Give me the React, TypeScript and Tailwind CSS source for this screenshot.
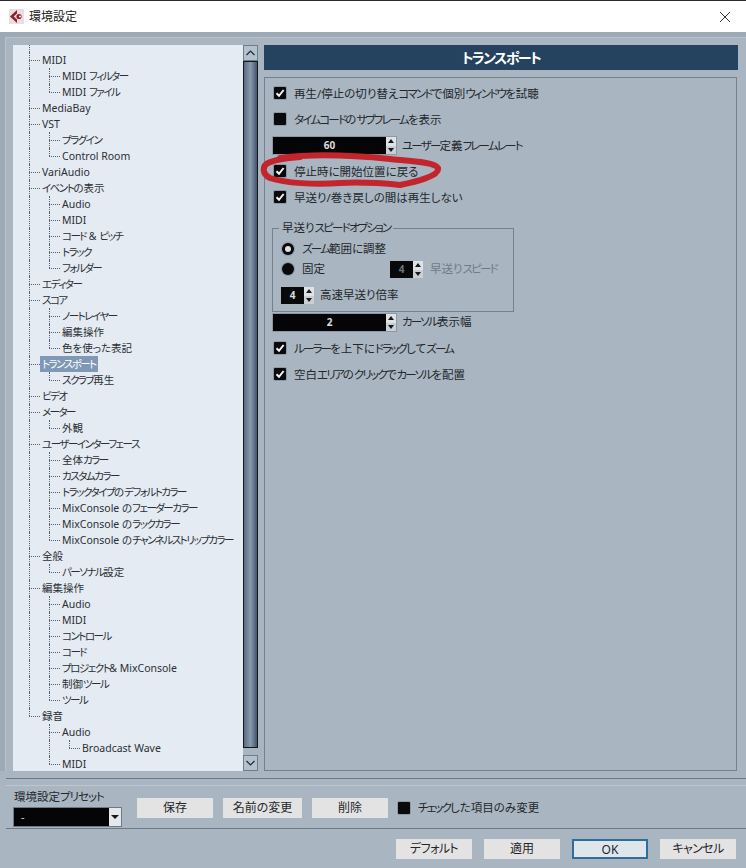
const font = { fontFamily: '"Noto Sans", "Noto Sans CJK JP", sans-serif' };

type Row = { label: string; depth: number; selected?: boolean };

const rows: Row[] = [
  { label: 'MIDI', depth: 0 },
  { label: 'MIDI フィルター', depth: 1 },
  { label: 'MIDI ファイル', depth: 1 },
  { label: 'MediaBay', depth: 0 },
  { label: 'VST', depth: 0 },
  { label: 'プラグイン', depth: 1 },
  { label: 'Control Room', depth: 1 },
  { label: 'VariAudio', depth: 0 },
  { label: 'イベントの表示', depth: 0 },
  { label: 'Audio', depth: 1 },
  { label: 'MIDI', depth: 1 },
  { label: 'コード & ピッチ', depth: 1 },
  { label: 'トラック', depth: 1 },
  { label: 'フォルダー', depth: 1 },
  { label: 'エディター', depth: 0 },
  { label: 'スコア', depth: 0 },
  { label: 'ノートレイヤー', depth: 1 },
  { label: '編集操作', depth: 1 },
  { label: '色を使った表記', depth: 1 },
  { label: 'トランスポート', depth: 0, selected: true },
  { label: 'スクラブ再生', depth: 1 },
  { label: 'ビデオ', depth: 0 },
  { label: 'メーター', depth: 0 },
  { label: '外観', depth: 1 },
  { label: 'ユーザーインターフェース', depth: 0 },
  { label: '全体カラー', depth: 1 },
  { label: 'カスタムカラー', depth: 1 },
  { label: 'トラックタイプのデフォルトカラー', depth: 1 },
  { label: 'MixConsole のフェーダーカラー', depth: 1 },
  { label: 'MixConsole のラックカラー', depth: 1 },
  { label: 'MixConsole のチャンネルストリップカラー', depth: 1 },
  { label: '全般', depth: 0 },
  { label: 'パーソナル設定', depth: 1 },
  { label: '編集操作', depth: 0 },
  { label: 'Audio', depth: 1 },
  { label: 'MIDI', depth: 1 },
  { label: 'コントロール', depth: 1 },
  { label: 'コード', depth: 1 },
  { label: 'プロジェクト& MixConsole', depth: 1 },
  { label: '制御ツール', depth: 1 },
  { label: 'ツール', depth: 1 },
  { label: '録音', depth: 0 },
  { label: 'Audio', depth: 1 },
  { label: 'Broadcast Wave', depth: 2 },
  { label: 'MIDI', depth: 1 },
];

// katakana in the original UI font is much narrower than in Noto, so tighten just those runs
function Kana({ text, tight = 'tracking-[-1.8px]' }: { text: string; tight?: string }) {
  return (
    <>
      {text.split(/([\u30a0-\u30ff]+)/).map((part, i) =>
        i % 2 === 1 ? (
          <span key={i} className={tight}>
            {part}
          </span>
        ) : (
          part
        ),
      )}
    </>
  );
}

// does a later row at this depth exist before the tree climbs above it?
function continues(index: number, depth: number) {
  for (let i = index + 1; i < rows.length; i++) {
    if (rows[i].depth < depth) return false;
    if (rows[i].depth === depth) return true;
  }
  return false;
}

function TreeRow({ row, index }: { row: Row; index: number }) {
  const guides = [];
  for (let d = 0; d <= row.depth; d++) {
    const own = d === row.depth;
    const full = continues(index, d);
    if (!own && !full) {
      guides.push(<div key={d} className="w-[20px] shrink-0" />);
    } else {
      guides.push(
        <div key={d} className="relative w-[20px] shrink-0 h-[16px]">
          <div
            className={`absolute left-0 top-0 border-l border-dotted border-[#55606c] ${full ? 'h-[16px]' : 'h-[8px]'}`}
          />
          {own && <div className="absolute left-0 top-[8px] w-[11px] border-t border-dotted border-[#55606c]" />}
        </div>,
      );
    }
  }
  return (
    <div className="flex h-[16px] shrink-0 items-center pl-[16px]">
      {guides}
      <span
        className={`-ml-[9px] h-[16px] whitespace-nowrap px-[2px] text-[10.5px] leading-[16px] ${row.selected ? 'bg-[#7e98b5] text-white' : 'text-[#2b2f33]'}`}
      >
        <Kana text={row.label} tight="tracking-[-1.5px]" />
      </span>
    </div>
  );
}

function Check({ checked = true }: { checked?: boolean }) {
  return (
    <div className="flex h-[12px] w-[12px] shrink-0 items-center justify-center rounded-[1px] bg-[#0a0a0c] shadow-[0_0_0_1px_#8c98a4]">
      {checked && (
        <svg width="10" height="10" viewBox="0 0 10 10">
          <path d="M1.5 5.2 L4 7.8 L8.6 2" fill="none" stroke="#f2f4f6" strokeWidth="2" />
        </svg>
      )}
    </div>
  );
}

function CheckRow({ label, checked = true }: { label: string; checked?: boolean }) {
  return (
    <div className="flex h-[26px] items-center pl-[9px]">
      <Check checked={checked} />
      <span className="ml-[8px] pt-[2px] text-[11.5px] text-[#23272b]">
        <Kana text={label} />
      </span>
    </div>
  );
}

function Spinner() {
  return (
    <div className="flex w-[10px] shrink-0 flex-col justify-between bg-[#dfe3e6]">
      <div className="flex h-[8px] items-center justify-center">
        <div className="h-0 w-0 border-x-[3px] border-b-[4px] border-x-transparent border-b-[#16181a]" />
      </div>
      <div className="flex h-[8px] items-center justify-center bg-[#c9cfd4]">
        <div className="h-0 w-0 border-x-[3px] border-t-[4px] border-x-transparent border-t-[#16181a]" />
      </div>
    </div>
  );
}

function NumberField({ value }: { value: string }) {
  return (
    <div className="flex h-[17px] w-[123px] shrink-0 shadow-[0_0_0_1px_#8c98a4]">
      <div className="flex-1 bg-[#050507] text-center text-[10px] leading-[17px] font-bold text-[#d8dcdf]">{value}</div>
      <Spinner />
    </div>
  );
}

function SmallField({ value, dim = false }: { value: string; dim?: boolean }) {
  return (
    <div className="flex h-[17px] w-[33px] shrink-0">
      <div className={`flex-1 bg-[#08090b] text-center text-[10px] leading-[17px] font-bold ${dim ? 'text-[#6f767c]' : 'text-[#d8dcdf]'}`}>
        {value}
      </div>
      <Spinner />
    </div>
  );
}

function Btn({ label, primary = false, wide = false }: { label: string; primary?: boolean; wide?: boolean }) {
  return (
    <button
      className={`h-[20px] shrink-0 text-[12px] leading-[18px] text-[#23272b] ${wide ? 'w-[79px]' : 'w-[76px]'} ${primary ? 'border-2 border-[#2f6d9e] bg-[#dfe6eb]' : 'bg-[#e3e3e3]'}`}
    >
      <Kana text={label} tight="tracking-[-0.6px]" />
    </button>
  );
}

function Radio({ filled = false }: { filled?: boolean }) {
  return (
    <div className="flex h-[12px] w-[12px] shrink-0 items-center justify-center rounded-full bg-[#0a0a0c] shadow-[0_0_0_1px_#8c98a4]">
      {!filled && <div className="h-[6px] w-[6px] rounded-full bg-[#dce1e5]" />}
    </div>
  );
}

export default function App() {
  return (
    <div
      className="flex h-[868px] w-[746px] flex-col overflow-hidden bg-[#a9b6c2] [font-feature-settings:'palt']"
      style={font}
    >
      {/* title bar */}
      <div className="flex h-[32px] shrink-0 items-center border-t border-[#2a2a2a] bg-white pl-[9px] pr-[15px]">
        <svg width="15" height="15" viewBox="0 0 15 15">
          <rect width="15" height="15" fill="#e9dfe0" />
          <path d="M8 1 L1 7.5 L8 14 L8 10.6 L4.6 7.5 L8 4.4 Z" fill="#8f1f2b" />
          <circle cx="10" cy="7.5" r="2.6" fill="#8f1f2b" />
          <circle cx="11" cy="7.5" r="1" fill="#fff" />
        </svg>
        <span className="ml-[5px] text-[12px] text-[#222]">環境設定</span>
        <svg className="ml-auto" width="12" height="12" viewBox="0 0 12 12">
          <path d="M1 1 L11 11 M11 1 L1 11" stroke="#333" strokeWidth="1" />
        </svg>
      </div>

      {/* main */}
      <div className="shrink-0 bg-[#9daab6] pl-[5px] pt-[5px]">
        <div className="flex border-l border-t border-[#b8c4ce] bg-[#a9b6c2] pl-[7px] pt-[7px]">
          <div className="flex h-[726px] w-[230px] shrink-0 flex-col overflow-hidden bg-[#e4ebf3]">
            <div className="ml-[16px] h-[7px] shrink-0 border-l border-dotted border-[#55606c]" />
            {rows.map((row, i) => (
              <TreeRow key={i} row={row} index={i} />
            ))}
          </div>

          {/* scrollbar */}
          <div className="flex h-[726px] w-[15px] shrink-0 flex-col bg-[#a9b6c2]">
            <div className="flex h-[16px] shrink-0 items-center justify-center border border-[#6f7d8a] bg-[#b4c0cb]">
              <svg width="9" height="6" viewBox="0 0 9 6">
                <path d="M0.5 5 L4.5 1 L8.5 5" fill="none" stroke="#1c2a38" strokeWidth="1.2" />
              </svg>
            </div>
            <div className="h-[687px] shrink-0 border border-[#14181d] bg-gradient-to-r from-[#5a6d83] via-[#8a9aad] to-[#42566c]" />
            <div className="h-[7px] shrink-0" />
            <div className="flex h-[16px] shrink-0 items-center justify-center border border-[#6f7d8a] bg-[#b4c0cb]">
              <svg width="9" height="6" viewBox="0 0 9 6">
                <path d="M0.5 1 L4.5 5 L8.5 1" fill="none" stroke="#1c2a38" strokeWidth="1.2" />
              </svg>
            </div>
          </div>

          {/* right side */}
          <div className="relative ml-[6px] flex h-[726px] w-[474px] shrink-0 flex-col">
            <div className="flex h-[25px] shrink-0 items-center justify-center bg-[#25435f] text-[14px] font-bold text-white">
              <span className="tracking-[-1.5px]">トランスポート</span>
            </div>
            <div className="mr-[1px] mt-[7px] flex-1 border border-[#75828e] pt-[2px]">
              <CheckRow label="再生/停止の切り替えコマンドで個別ウィンドウを試聴" />
              <CheckRow label="タイムコードのサブフレームを表示" checked={false} />
              <div className="flex h-[26px] items-center pl-[8px]">
                <NumberField value="60" />
                <span className="ml-[6px] pt-[2px] text-[11.5px] text-[#23272b]">
                  <Kana text="ユーザー定義フレームレート" />
                </span>
              </div>
              <CheckRow label="停止時に開始位置に戻る" />
              <CheckRow label="早送り/巻き戻しの間は再生しない" />

              {/* group box */}
              <div className="relative ml-[7px] mt-[18px] h-[84px] w-[242px] border border-[#75828e] pl-[9px] pt-[10px]">
                <span className="absolute -top-[9px] left-[6px] bg-[#a9b6c2] px-[3px] text-[11.5px] leading-[16px] text-[#23272b]">
                  <Kana text="早送りスピードオプション" />
                </span>
                <div className="flex h-[20px] items-center">
                  <Radio />
                  <span className="ml-[8px] text-[11.5px] text-[#23272b]">
                    <Kana text="ズーム範囲に調整" />
                  </span>
                </div>
                <div className="flex h-[20px] items-center">
                  <Radio filled />
                  <span className="ml-[8px] text-[11.5px] text-[#23272b]">固定</span>
                  <div className="ml-[65px]">
                    <SmallField value="4" dim />
                  </div>
                  <span className="ml-[7px] text-[11.5px] text-[#6f7b86]">
                    <Kana text="早送りスピード" />
                  </span>
                </div>
                <div className="-ml-[1px] mt-[6px] flex h-[20px] items-center">
                  <SmallField value="4" />
                  <span className="ml-[6px] text-[11.5px] text-[#23272b]">高速早送り倍率</span>
                </div>
              </div>

              <div className="mt-[1px] flex h-[18px] items-center pl-[8px]">
                <NumberField value="2" />
                <span className="ml-[6px] text-[11.5px] text-[#23272b]">
                  <Kana text="カーソル表示幅" />
                </span>
              </div>
              <div className="mt-[4px]">
                <CheckRow label="ルーラーを上下にドラッグしてズーム" />
                <CheckRow label="空白エリアのクリックでカーソルを配置" />
              </div>
            </div>

            {/* hand-drawn red marker around the option */}
            <svg className="absolute -left-[4px] top-[107px]" width="190" height="40" viewBox="0 0 190 40" fill="none">
              <path
                d="M20 6 C50 2 90 3 130 7 C150 9 175 10 178 16 C180 24 155 30 140 33 C120 31 100 30 80 31 C55 33 25 31 10 26 C2 22 2 14 8 11 C14 8 25 6 40 5"
                stroke="#c4242c"
                strokeWidth="6"
                strokeLinecap="round"
              />
            </svg>
          </div>
        </div>
      </div>

      {/* preset strip */}
      <div className="ml-[6px] mt-[7px] h-[7px] shrink-0 border-t border-[#6d7a86]">
        <div className="mt-[6px] border-t border-[#bcc7d1]" />
      </div>
      <div className="ml-[6px] flex h-[44px] shrink-0 border-b border-[#6d7a86] pl-[8px]">
        <div className="flex w-[107px] shrink-0 flex-col">
          <span className="mt-[5px] text-[11.5px] leading-[14px] text-[#23272b]">
            <Kana text="環境設定プリセット" tight="tracking-[-1px]" />
          </span>
          <div className="mt-[4px] flex h-[18px] items-center bg-[#050507] shadow-[0_0_0_1px_#6d7a86]">
            <span className="flex-1 pl-[7px] text-[11px] leading-[16px] text-[#d8dcdf]">-</span>
            <div className="flex h-[18px] w-[12px] items-center justify-center bg-[#e6e9ec]">
              <div className="h-0 w-0 border-x-[4px] border-t-[4px] border-x-transparent border-t-[#16181a]" />
            </div>
          </div>
        </div>
        <div className="ml-[16px] mt-[13px] flex h-[20px] items-center gap-[10px]">
          <Btn label="保存" />
          <Btn label="名前の変更" wide />
          <Btn label="削除" />
          <Check checked={false} />
          <span className="-ml-[2px] text-[11.5px] text-[#23272b]">
            <Kana text="チェックした項目のみ変更" />
          </span>
        </div>
      </div>

      {/* dialog buttons */}
      <div className="mt-[10px] flex justify-end gap-[12px] pr-[10px]">
        <Btn label="デフォルト" />
        <Btn label="適用" />
        <Btn label="OK" primary />
        <Btn label="キャンセル" />
      </div>
    </div>
  );
}
